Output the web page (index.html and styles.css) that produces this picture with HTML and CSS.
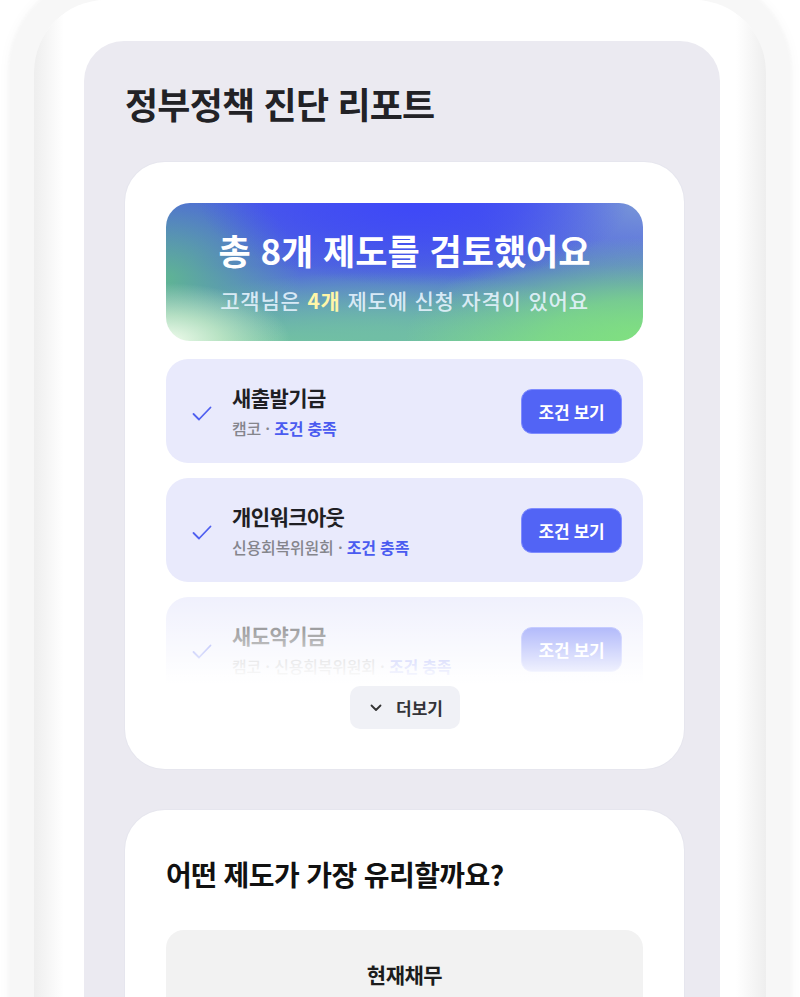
FILE: index.html
```html
<!DOCTYPE html>
<html lang="ko">
<head>
<meta charset="utf-8">
<title>정부정책 진단 리포트</title>
<link rel="stylesheet" href="styles.css">
</head>
<body>
<div class="stage">
  <div class="phone">
    <div class="screen">
      <h1 class="page-title">정부정책 진단 리포트</h1>

      <section class="card">
        <div class="banner">
          <div class="banner-title">총 8개 제도를 검토했어요</div>
          <div class="banner-sub">고객님은 <b class="hl">4개</b> 제도에 신청 자격이 있어요</div>
        </div>

        <div class="list-wrap">
          <div class="list">
            <div class="row">
              <svg class="check" viewBox="0 0 20 16" width="20" height="16"><polyline points="1.5,8 7,13.5 18.5,1.5" fill="none" stroke="#4F5FF0" stroke-width="1.8" stroke-linecap="round" stroke-linejoin="round"/></svg>
              <div class="info">
                <div class="name">새출발기금</div>
                <div class="meta">캠코 · <span class="ok">조건 충족</span></div>
              </div>
              <button class="btn">조건 보기</button>
            </div>
            <div class="row">
              <svg class="check" viewBox="0 0 20 16" width="20" height="16"><polyline points="1.5,8 7,13.5 18.5,1.5" fill="none" stroke="#4F5FF0" stroke-width="1.8" stroke-linecap="round" stroke-linejoin="round"/></svg>
              <div class="info">
                <div class="name">개인워크아웃</div>
                <div class="meta">신용회복위원회 · <span class="ok">조건 충족</span></div>
              </div>
              <button class="btn">조건 보기</button>
            </div>
            <div class="row">
              <svg class="check" viewBox="0 0 20 16" width="20" height="16"><polyline points="1.5,8 7,13.5 18.5,1.5" fill="none" stroke="#4F5FF0" stroke-width="1.8" stroke-linecap="round" stroke-linejoin="round"/></svg>
              <div class="info">
                <div class="name">새도약기금</div>
                <div class="meta">캠코 · 신용회복위원회 · <span class="ok">조건 충족</span></div>
              </div>
              <button class="btn">조건 보기</button>
            </div>
          </div>
          <div class="fade"></div>
        </div>

        <div class="more-line">
          <button class="more">
            <svg class="chev" viewBox="0 0 12 8" width="12" height="8"><polyline points="1.5,1.5 6,6 10.5,1.5" fill="none" stroke="#333" stroke-width="1.8" stroke-linecap="round" stroke-linejoin="round"/></svg>
            <span>더보기</span>
          </button>
        </div>
      </section>

      <section class="card card2">
        <h2 class="q-title">어떤 제도가 가장 유리할까요?</h2>
        <div class="compare">
          <div class="compare-head">현재채무</div>
        </div>
      </section>
    </div>
  </div>
</div>
</body>
</html>
```
FILE: styles.css
```css
* { box-sizing: border-box; }
html, body {
  margin: 0;
  padding: 0;
  background: #ffffff;
  font-family: "Noto Sans CJK KR", "Noto Sans", sans-serif;
  color: #222;
}
.stage {
  width: 800px;
  height: 997px;
  overflow: hidden;
  padding: 0 34px 0 34px;
  background: #ffffff;
}
.phone {
  height: 1200px;
  border-radius: 72px;
  padding: 41px 46px 0 50px;
  background: linear-gradient(to right, #eeeeee 0, #ffffff 30px, #ffffff calc(100% - 30px), #eeeeee 100%);
  box-shadow: 0 0 3px 26px #f7f7f7, 0 0 8px 30px #fcfcfc;
}
.screen {
  background: #EBEAF1;
  border-radius: 40px 40px 0 0;
  padding: 30px 36px 0 41px;
  height: 1200px;
}
.page-title {
  margin: 0 0 27px 0;
  font-size: 36px;
  line-height: 64px;
  font-weight: 700;
  letter-spacing: -0.8px;
  color: #222226;
}
.card {
  background: #ffffff;
  border-radius: 40px;
  padding: 41px 41px 40px 41px;
  box-shadow: 0 0 0 1px #e6e6ee;
}
.banner {
  height: 138px;
  border-radius: 24px;
  text-align: center;
  padding-top: 24px;
  color: #fff;
  background:
    radial-gradient(ellipse 45% 60% at 52% 0%, rgba(62,72,248,1) 0%, rgba(62,72,248,0.6) 50%, rgba(62,72,248,0) 100%),
    radial-gradient(ellipse 26% 42% at 0% 100%, rgba(242,252,238,1) 0%, rgba(215,243,210,0.7) 45%, rgba(200,240,200,0) 100%),
    radial-gradient(ellipse 50% 75% at 100% 100%, rgba(128,224,128,1) 0%, rgba(128,224,128,0.75) 40%, rgba(128,224,128,0) 100%),
    radial-gradient(ellipse 28% 80% at 0% 55%, rgba(95,180,148,1) 0%, rgba(95,180,148,0.5) 50%, rgba(95,180,148,0) 100%),
    radial-gradient(ellipse 35% 60% at 100% 0%, rgba(120,150,215,1) 0%, rgba(120,150,215,0) 100%),
    radial-gradient(ellipse 55% 50% at 45% 100%, rgba(112,190,165,1) 0%, rgba(112,190,165,0) 100%),
    linear-gradient(180deg, #4a5ae6 0%, #5068dc 45%, #5f95c0 75%, #74c4a0 100%);
}
.banner-title {
  font-size: 35px;
  font-weight: 700;
  line-height: 46px;
  letter-spacing: 0;
  color: #ffffff;
}
.banner-sub {
  margin-top: 12px;
  font-size: 21px;
  line-height: 30px;
  font-weight: 500;
  letter-spacing: 0.8px;
  color: rgba(232, 244, 255, 0.9);
}
.hl {
  color: #FFF6A8;
  font-weight: 700;
}
.list-wrap {
  position: relative;
  margin-top: 18px;
  height: 325px;
  overflow: hidden;
}
.list {
  display: flex;
  flex-direction: column;
  gap: 15px;
}
.row {
  height: 104px;
  flex: none;
  border-radius: 22px;
  background: #E9EAFC;
  display: flex;
  align-items: center;
  padding: 0 21px 0 26px;
}
.check {
  flex: none;
  margin-right: 20px;
  margin-top: 6px;
}
.info {
  flex: 1;
}
.name {
  font-size: 21px;
  font-weight: 700;
  line-height: 30px;
  letter-spacing: -0.6px;
  color: #1f1f24;
}
.meta {
  margin-top: 4px;
  font-size: 16px;
  line-height: 24px;
  font-weight: 500;
  letter-spacing: -0.2px;
  color: #85858c;
}
.ok {
  color: #4A5BF0;
  font-weight: 700;
}
.btn {
  flex: none;
  width: 101px;
  height: 45px;
  border: 1px solid #7f8cff;
  border-radius: 11px;
  background: #5264F5;
  color: #ffffff;
  font-family: inherit;
  font-size: 17px;
  font-weight: 700;
  letter-spacing: -0.3px;
  padding: 0;
}
.fade {
  position: absolute;
  left: 0;
  right: 0;
  bottom: 0;
  height: 95px;
  background: linear-gradient(180deg, rgba(255,255,255,0.25) 0%, rgba(255,255,255,0.95) 92%, #ffffff 100%);
}
.more-line {
  display: flex;
  justify-content: center;
  margin-top: 2px;
}
.more {
  width: 110px;
  height: 43px;
  border: none;
  border-radius: 10px;
  background: #F0F1F6;
  display: flex;
  align-items: center;
  justify-content: center;
  gap: 14px;
  font-family: inherit;
  font-size: 17px;
  font-weight: 700;
  color: #333338;
  padding: 0 0 0 4px;
}
.chev { flex: none; }
.card2 {
  margin-top: 41px;
  padding-top: 44px;
}
.q-title {
  margin: 0;
  font-size: 28px;
  line-height: 40px;
  font-weight: 700;
  letter-spacing: -0.6px;
  color: #111;
}
.compare {
  margin-top: 36px;
  background: #F2F2F2;
  border-radius: 18px;
  height: 200px;
  padding-top: 29px;
  text-align: center;
}
.compare-head {
  font-size: 21px;
  line-height: 30px;
  font-weight: 700;
  letter-spacing: -0.5px;
  color: #1c1c1c;
}
```
